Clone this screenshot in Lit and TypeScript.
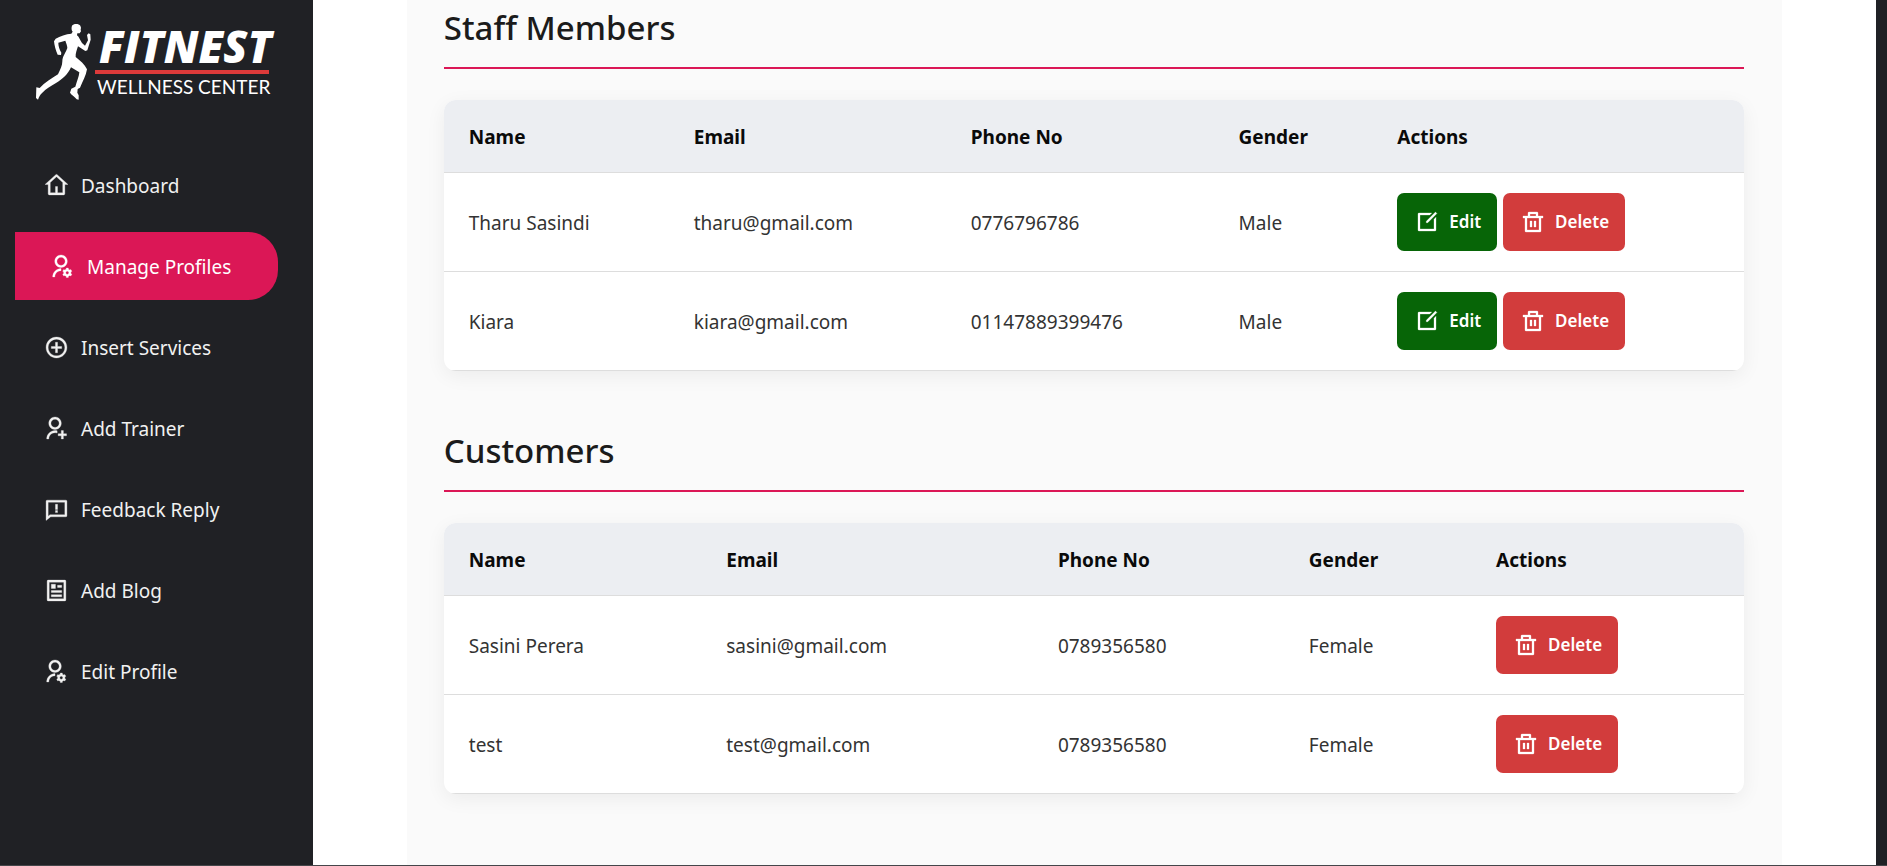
import { LitElement, html, css, svg } from "lit";
import { customElement, property } from "lit/decorators.js";
import { classMap } from "lit/directives/class-map.js";

const HEAD = "M12 13C8.685 13 6 10.315 6 7C6 3.685 8.685 1 12 1C15.315 1 18 3.685 18 7C18 10.315 15.315 13 12 13ZM12 11C14.21 11 16 9.21 16 7C16 4.79 14.21 3 12 3C9.79 3 8 4.79 8 7C8 9.21 9.79 11 12 11Z";

const ICONS: Record<string, string> = {
  home: "M13 19H18V9.15745L12 3.7029L6 9.15745V19H11V13H13V19ZM20 20C20 20.5523 19.5523 21 19 21H5C4.44772 21 4 20.5523 4 20V11H1L11.3273 1.6115C11.7087 1.26475 12.2913 1.26475 12.6727 1.6115L23 11H20V20Z",
  userSettings: "M12 14V16C8.68629 16 6 18.6863 6 22H4C4 17.5817 7.58172 14 12 14Z" + HEAD + "M14.5946 18.8115C14.5327 18.5511 14.5 18.2794 14.5 18C14.5 17.7207 14.5327 17.449 14.5945 17.1886L13.6029 16.6161L14.6029 14.884L15.5952 15.4569C15.9883 15.0851 16.4676 14.8034 17 14.6449V13.5H19V14.6449C19.5324 14.8034 20.0116 15.0851 20.4047 15.4569L21.3971 14.8839L22.3972 16.616L21.4055 17.1885C21.4673 17.449 21.5 17.7207 21.5 18C21.5 18.2793 21.4673 18.551 21.4055 18.8114L22.3972 19.3839L21.3972 21.116L20.4048 20.543C20.0117 20.9149 19.5325 21.1966 19.0001 21.355V22.5H17.0001V21.3551C16.4677 21.1967 15.9884 20.915 15.5953 20.5431L14.603 21.1161L13.6029 19.384L14.5946 18.8115ZM18 19.5C18.8284 19.5 19.5 18.8284 19.5 18C19.5 17.1716 18.8284 16.5 18 16.5C17.1716 16.5 16.5 17.1716 16.5 18C16.5 18.8284 17.1716 19.5 18 19.5Z",
  addCircle: "M11 11V7H13V11H17V13H13V17H11V13H7V11H11ZM12 22C6.47715 22 2 17.5228 2 12C2 6.47715 6.47715 2 12 2C17.5228 2 22 6.47715 22 12C22 17.5228 17.5228 22 12 22ZM12 20C16.4183 20 20 16.4183 20 12C20 7.58172 16.4183 4 12 4C7.58172 4 4 7.58172 4 12C4 16.4183 7.58172 20 12 20Z",
  userAdd: "M14 14.252V16.3414C13.3744 16.1203 12.7013 16 12 16C8.68629 16 6 18.6863 6 22H4C4 17.5817 7.58172 14 12 14C12.6906 14 13.3608 14.0875 14 14.252Z" + HEAD + "M18 17V14H20V17H23V19H20V22H18V19H15V17H18Z",
  feedback: "M6.45455 19L2 22.5V4C2 3.44772 2.44772 3 3 3H21C21.5523 3 22 3.44772 22 4V18C22 18.5523 21.5523 19 21 19H6.45455ZM4 18.3851L5.76282 17H20V5H4V18.3851ZM11 13H13V15H11V13ZM11 7H13V12H11V7Z",
  article: "M20 22H4C3.44772 22 3 21.5523 3 21V3C3 2.44772 3.44772 2 4 2H20C20.5523 2 21 2.44772 21 3V21C21 21.5523 20.5523 22 20 22ZM19 20V4H5V20H19ZM7 6H11V10H7V6ZM7 12H17V14H7V12ZM7 16H17V18H7V16ZM13 7H17V9H13V7Z",
  edit: "M16.7574 2.99678L14.7574 4.99678H5V18.9968H19V9.23943L21 7.23943V19.9968C21 20.5491 20.5523 20.9968 20 20.9968H4C3.44772 20.9968 3 20.5491 3 19.9968V3.99678C3 3.4445 3.44772 2.99678 4 2.99678H16.7574ZM20.4853 2.09729L21.8995 3.5115L12.7071 12.7039L11.2954 12.7064L11.2929 11.2897L20.4853 2.09729Z",
  bin: "M17 6H22V8H20V21C20 21.5523 19.5523 22 19 22H5C4.44772 22 4 21.5523 4 21V8H2V6H7V3C7 2.44772 7.44772 2 8 2H16C16.5523 2 17 2.44772 17 3V6ZM18 8H6V20H18V8ZM9 11H11V17H9V11ZM13 11H15V17H13V11ZM9 4V6H15V4H9Z",
};

// The user glyphs are drawn off-centre in their box, so their view starts further right.
const icon = (name: string) =>
  html`<svg class="icon" viewBox=${name.startsWith("user") ? "1.4 0 24 24" : "0 0 24 24"} aria-hidden="true">${svg`<path d=${ICONS[name]} />`}</svg>`;

interface Person {
  name: string;
  email: string;
  phone: string;
  gender: string;
}

const NAV = [
  { label: "Dashboard", icon: "home" },
  { label: "Manage Profiles", icon: "userSettings", active: true },
  { label: "Insert Services", icon: "addCircle" },
  { label: "Add Trainer", icon: "userAdd" },
  { label: "Feedback Reply", icon: "feedback" },
  { label: "Add Blog", icon: "article" },
  { label: "Edit Profile", icon: "userSettings" },
];

const STAFF: Person[] = [
  { name: "Tharu Sasindi", email: "tharu@gmail.com", phone: "0776796786", gender: "Male" },
  { name: "Kiara", email: "kiara@gmail.com", phone: "01147889399476", gender: "Male" },
];

const CUSTOMERS: Person[] = [
  { name: "Sasini Perera", email: "sasini@gmail.com", phone: "0789356580", gender: "Female" },
  { name: "test", email: "test@gmail.com", phone: "0789356580", gender: "Female" },
];

@customElement("side-nav")
class SideNav extends LitElement {
  static styles = css`
    :host {
      display: block;
      box-sizing: border-box;
      width: 313px;
      flex: none;
      background: #202125;
      color: #f1f1f1;
    }
    .brand {
      display: flex;
      align-items: flex-start;
      padding: 22px 0 0 35px;
      height: 129px;
      box-sizing: border-box;
      color: #fff;
      font-family: Lato, sans-serif;
      text-decoration: none;
    }
    .runner {
      width: 60px;
      height: 80px;
      flex: none;
    }
    .words {
      display: flex;
      flex-direction: column;
      white-space: nowrap;
    }
    .title {
      font-family: "Open Sans", sans-serif;
      font-size: 44px;
      line-height: 48px;
      font-weight: 800;
      font-style: italic;
      padding-left: 4px;
    }
    .rule {
      height: 4px;
      width: 174px;
      background: #dc3a3a;
    }
    .tagline {
      font-size: 19px;
      line-height: 26px;
      padding-left: 2px;
    }
    .list {
      display: flex;
      flex-direction: column;
      gap: 13px;
      list-style: none;
      margin: 0;
      padding: 22px 35px 22px 15px;
    }
    .link {
      display: flex;
      align-items: center;
      gap: 12px;
      height: 68px;
      padding-left: 29px;
      color: inherit;
      font-size: 19px;
      line-height: 28px;
      text-decoration: none;
    }
    .label {
      padding-top: 2px;
    }
    .active {
      padding-left: 35px;
      background: #db1756;
      border-radius: 0 30px 30px 0;
      color: #fff;
    }
    .icon {
      width: 25px;
      height: 25px;
      flex: none;
      fill: currentColor;
      stroke: currentColor;
      stroke-width: 0.3;
    }
  `;

  render() {
    return html`
      <a class="brand" href="#">
        <svg class="runner" viewBox="15 21 180 240" fill="#fff" aria-hidden="true">
          <path d="M126 32C130 25 147 25 151 32L153 38L152 44L153 49L149 55L142 55L141 61C148 66 151 78 156 84L165 92L174 76L171 60L176 55L181 58L182 74L172 106L166 108L144 94C141 104 136 116 137 126C150 136 164 148 171 163C168 182 158 200 150 218L143 222L142 233L146 241L146 254L140 253C136 246 124 240 120 233L124 221L136 215C141 198 147 184 148 172L123 157C114 177 98 193 78 204C60 214 48 222 37 233C30 239 27 246 24 254L18 249L19 217L29 219C44 202 66 190 84 178C91 164 97 152 97 139C97 124 108 112 112 99C112 91 108 84 106 77L85 83C85 92 88 104 94 113L93 120L83 119C77 106 73 90 72 79L77 71C90 63 108 57 124 56L128 50C124 46 124 38 126 32Z" />
        </svg>
        <span class="words">
          <span class="title">FITNEST</span>
          <span class="rule"></span>
          <span class="tagline">WELLNESS CENTER</span>
        </span>
      </a>
      <nav>
        <ul class="list">
          ${NAV.map(
            (item) => html`<li>
              <a class=${classMap({ link: true, active: !!item.active })} href="#">${icon(item.icon)}<span class="label">${item.label}</span></a>
            </li>`
          )}
        </ul>
      </nav>
    `;
  }
}

@customElement("profile-table")
class ProfileTable extends LitElement {
  @property() heading = "";
  @property({ type: Array }) rows: Person[] = [];
  @property({ type: Array }) widths: number[] = [];
  @property({ type: Boolean }) editable = false;

  static styles = css`
    :host {
      display: block;
    }
    .heading {
      margin: 0 0 31px;
      padding-bottom: 16px;
      border-bottom: 2px solid #db1756;
      color: #1b1b1b;
      font-size: 33px;
      line-height: 46px;
      font-weight: 500;
    }
    .table {
      width: 100%;
      table-layout: fixed;
      border-collapse: separate;
      border-spacing: 0;
      border-radius: 12px;
      overflow: hidden;
      background: #fff;
      box-shadow: 0 5px 20px rgba(0, 0, 0, 0.06);
      font-size: 19px;
      line-height: 28px;
      text-align: left;
    }
    .head {
      padding: 23px 25px 21px;
      background: #eceef2;
      border-bottom: 1px solid #dddddd;
      color: #0a0a0a;
      font-weight: 700;
    }
    .cell {
      padding: 22px 25px 20px;
      border-bottom: 1px solid #dddddd;
      color: #333;
    }
    .controls {
      padding-top: 20px;
    }
    .actions {
      display: flex;
      gap: 6px;
    }
    .btn {
      display: flex;
      align-items: center;
      gap: 10px;
      height: 58px;
      padding: 0 16px 0 18px;
      border: 0;
      border-radius: 7px;
      color: #fff;
      font: inherit;
      font-size: 17px;
      font-weight: 600;
    }
    .edit {
      background: #076507;
    }
    .delete {
      background: #d23c3c;
    }
    .icon {
      width: 24px;
      height: 24px;
      flex: none;
      fill: currentColor;
      stroke: currentColor;
      stroke-width: 0.3;
    }
  `;

  render() {
    return html`
      <h2 class="heading" id="heading">${this.heading}</h2>
      <table class="table" aria-labelledby="heading">
        <colgroup>
          ${this.widths.map((w) => html`<col style="width:${w}%" />`)}
        </colgroup>
        <thead>
          <tr>
            ${["Name", "Email", "Phone No", "Gender", "Actions"].map((h) => html`<th class="head" scope="col">${h}</th>`)}
          </tr>
        </thead>
        <tbody>
          ${this.rows.map(
            (p) => html`<tr>
              <td class="cell">${p.name}</td>
              <td class="cell">${p.email}</td>
              <td class="cell">${p.phone}</td>
              <td class="cell">${p.gender}</td>
              <td class="cell controls">
                <div class="actions">
                  ${this.editable ? html`<button class="btn edit" type="button">${icon("edit")}<span>Edit</span></button>` : null}
                  <button class="btn delete" type="button">${icon("bin")}<span>Delete</span></button>
                </div>
              </td>
            </tr>`
          )}
        </tbody>
      </table>
    `;
  }
}

@customElement("app-root")
class AppRoot extends LitElement {
  static styles = css`
    :host {
      display: flex;
      box-sizing: border-box;
      min-height: 100vh;
      padding-right: 11px;
      border-bottom: 1px solid #45464a;
      background: #202125;
      font-family: "Segoe UI", "Noto Sans", sans-serif;
    }
    .main {
      flex: 1;
      display: flex;
      justify-content: center;
      background: #fff;
    }
    .panel {
      display: flex;
      flex-direction: column;
      gap: 57px;
      box-sizing: border-box;
      width: 88%;
      padding: 5px 38px 0 37px;
      background: #fafafa;
    }
  `;

  render() {
    return html`
      <side-nav></side-nav>
      <main class="main">
        <div class="panel">
          <profile-table heading="Staff Members" .rows=${STAFF} .widths=${[17.3, 21.3, 20.6, 12.2, 28.6]} editable></profile-table>
          <profile-table heading="Customers" .rows=${CUSTOMERS} .widths=${[19.8, 25.5, 19.3, 14.4, 21]}></profile-table>
        </div>
      </main>
    `;
  }
}
